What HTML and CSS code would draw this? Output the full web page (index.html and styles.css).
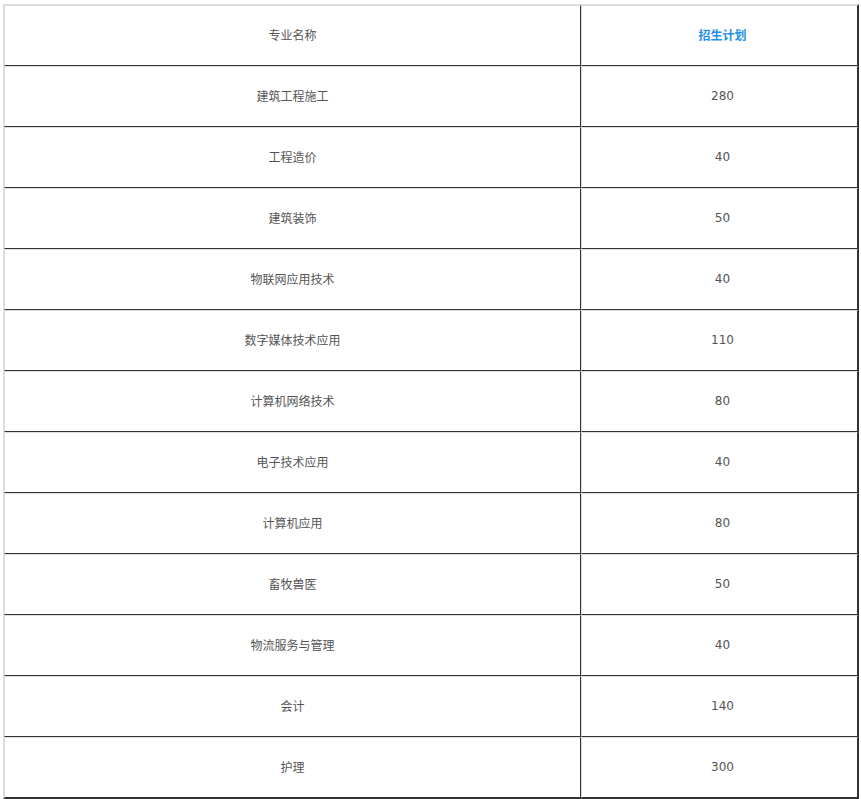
FILE: index.html
```html
<!DOCTYPE html>
<html lang="zh-CN">
<head>
<meta charset="utf-8">
<title>招生计划</title>
<link rel="stylesheet" href="styles.css">
</head>
<body>
<table class="plan">
  <tr><td class="name">专业名称</td><td class="num head">招生计划</td></tr>
  <tr><td class="name">建筑工程施工</td><td class="num">280</td></tr>
  <tr><td class="name">工程造价</td><td class="num">40</td></tr>
  <tr><td class="name">建筑装饰</td><td class="num">50</td></tr>
  <tr><td class="name">物联网应用技术</td><td class="num">40</td></tr>
  <tr><td class="name">数字媒体技术应用</td><td class="num">110</td></tr>
  <tr><td class="name">计算机网络技术</td><td class="num">80</td></tr>
  <tr><td class="name">电子技术应用</td><td class="num">40</td></tr>
  <tr><td class="name">计算机应用</td><td class="num">80</td></tr>
  <tr><td class="name">畜牧兽医</td><td class="num">50</td></tr>
  <tr><td class="name">物流服务与管理</td><td class="num">40</td></tr>
  <tr><td class="name">会计</td><td class="num">140</td></tr>
  <tr><td class="name">护理</td><td class="num">300</td></tr>
</table>
</body>
</html>
```
FILE: styles.css
```css
html, body {
  margin: 0;
  padding: 0;
  background: #fff;
}
body {
  padding: 4px 0 0 3px;
  font-family: "Noto Sans CJK SC", "Microsoft YaHei", sans-serif;
  font-size: 12px;
  color: #555;
}
.plan {
  border-collapse: separate;
  border-spacing: 0;
  border-top: 1px solid #ddd;
  border-left: 1px solid #ddd;
  border-right: 1px solid #333;
  border-bottom: 1px solid #333;
}
.plan td {
  height: 57px;
  padding: 0 0 2px 0;
  text-align: center;
  vertical-align: middle;
  border-top: 1px solid #ddd;
  border-left: 1px solid #ddd;
  border-right: 1px solid #333;
  border-bottom: 1px solid #333;
  line-height: 16px;
}
.plan td.name {
  width: 575px;
}
.plan td.num {
  width: 269px;
  padding-left: 6px;
  font-family: "DejaVu Sans", Verdana, sans-serif;
  font-size: 12px;
  color: #555;
}
.plan td.head {
  font-family: "Noto Sans CJK SC", "Microsoft YaHei", sans-serif;
  font-weight: bold;
  color: #1e8fe8;
}
```
